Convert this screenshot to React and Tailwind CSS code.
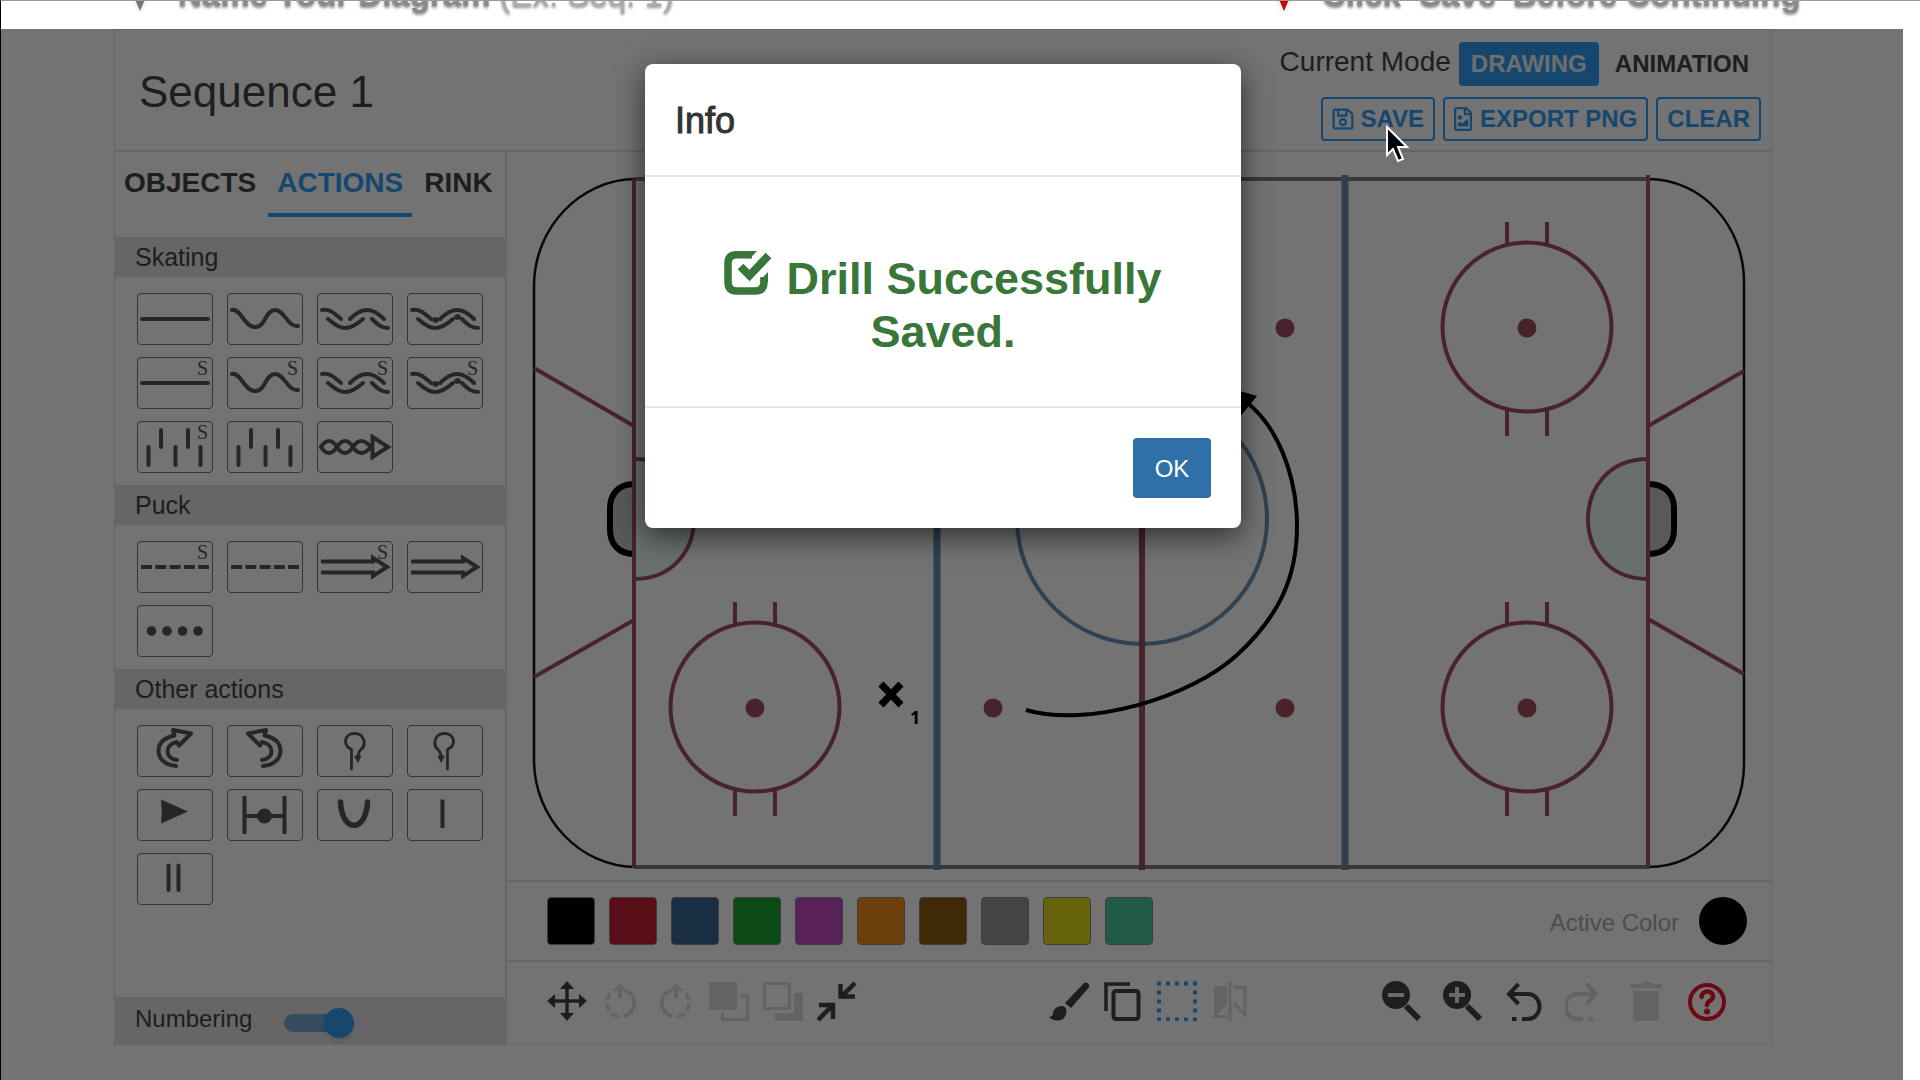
import React from 'react'
import { FaRegSave, FaRegFileImage } from 'react-icons/fa'

const LINE = {
    straight: <path d="M5 26H71" />,
    wave: <path d="M5 17C14 15 17 34 28 34S38 17 48 17S60 34 71 33" />,
    back: (
        <>
            <path d="M5 17C13 16 17 20 24 26" />
            <path d="M11 26C19 33 23 35 28 35S38 33 46 26" />
            <path d="M33 26C40 19 45 17 50 17S60 19 67 26" />
            <path d="M55 26C60 31 64 35 71 35" />
        </>
    ),
    crossover: (
        <>
            <path d="M5 17C13 16 17 20 24 26" />
            <path d="M11 26C19 33 23 35 28 35S38 33 46 26" />
            <path d="M33 26C40 19 45 17 50 17S60 19 67 26" />
            <path d="M55 26C60 31 64 35 71 35" />
            <path d="M28 27h1M50 24h1" strokeWidth="5.500" />
        </>
    ),
    lateral: <path d="M11.500 26V44M24 9V26M38.500 26V44M51 9V26M63.500 26V44" />,
    braid: (
        <>
            <path d="M4 26C9 18 15 18 20 26S31 34 36 26S47 18 54 26" />
            <path d="M4 26C9 34 15 34 20 26S31 18 36 26S47 34 54 26" />
            <path strokeLinejoin="miter" d="M55.500 16L71 26L55.500 36Z" />
        </>
    ),
    pass: <path strokeLinecap="butt" strokeDasharray="11 3.300" d="M4 26H72" />,
    shot: <path strokeLinecap="butt" strokeLinejoin="miter" d="M4 20.500H56V17L70 26L56 35V31.500H4" />,
    dots: (
        <g fill="currentColor" stroke="none">
            <circle cx="14.500" cy="26" r="4.800" />
            <circle cx="30" cy="26" r="4.800" />
            <circle cx="45.500" cy="26" r="4.800" />
            <circle cx="61" cy="26" r="4.800" />
        </g>
    ),
    turn: <path d="M39 41C28 40 21.500 34 21.500 25.500C21.500 17 29 12 37.500 10.500L36 5L54 8.500L42 20.500L40 17C34 18 30.500 22 30.500 26.500C30.500 31 34 34 40 35" />,
    loop: (
        <>
            <path strokeWidth="2.800" d="M34.500 44V24.500C25 20 27.500 8.500 37.500 8.500S50 20 43.500 25C41.500 27 41 29 41 33" />
            <path strokeWidth="1" fill="currentColor" d="M38 31H44L41 37Z" />
        </>
    ),
    play: <path fill="currentColor" stroke="none" d="M24 10.500L51 22.500L24 34.500Q25.500 22.500 24 10.500Z" />,
    stop: (
        <>
            <path strokeLinecap="butt" d="M17.500 7V45M57.500 7V45M17.500 27H57.500" />
            <circle cx="37.500" cy="27" r="7.500" fill="currentColor" stroke="none" />
        </>
    ),
    pivot: <path strokeWidth="5.500" d="M23.500 13C25 44 49 44 50.500 13" />,
    single: <path strokeLinecap="butt" d="M35.500 10.500V39" />,
    double: <path d="M31.500 12.500V37M41.500 12.500V37" />,
}

const mirrored = (shape) => <g transform="translate(75 0) scale(-1 1)">{shape}</g>

const sections = [
    {
        title: 'Skating',
        items: [
            { name: 'Skate forward', shape: LINE.straight },
            { name: 'Skate with puck', shape: LINE.wave },
            { name: 'Skate backward', shape: LINE.back },
            { name: 'Skate backward with puck', shape: LINE.crossover },
            { name: 'Skate forward and stop', shape: LINE.straight, stop: true },
            { name: 'Skate with puck and stop', shape: LINE.wave, stop: true },
            { name: 'Skate backward and stop', shape: LINE.back, stop: true },
            { name: 'Skate backward with puck and stop', shape: LINE.crossover, stop: true },
            { name: 'Lateral and stop', shape: LINE.lateral, stop: true },
            { name: 'Lateral', shape: LINE.lateral },
            { name: 'Weave', shape: LINE.braid },
        ],
    },
    {
        title: 'Puck',
        items: [
            { name: 'Pass and stop', shape: LINE.pass, stop: true },
            { name: 'Pass', shape: LINE.pass },
            { name: 'Shot and stop', shape: LINE.shot, stop: true },
            { name: 'Shot', shape: LINE.shot },
            { name: 'Drop pass', shape: LINE.dots },
        ],
    },
    {
        title: 'Other actions',
        items: [
            { name: 'Turn right', shape: LINE.turn },
            { name: 'Turn left', shape: mirrored(LINE.turn) },
            { name: 'Loop right', shape: LINE.loop },
            { name: 'Loop left', shape: mirrored(LINE.loop) },
            { name: 'Start', shape: LINE.play },
            { name: 'Screen', shape: LINE.stop },
            { name: 'Pivot', shape: LINE.pivot },
            { name: 'Single bar', shape: LINE.single },
            { name: 'Double bar', shape: LINE.double },
        ],
    },
]

const colors = [
    { name: 'Black', className: 'bg-black' },
    { name: 'Red', className: 'bg-[#c82335]' },
    { name: 'Blue', className: 'bg-[#3a6694]' },
    { name: 'Green', className: 'bg-[#1aa334]' },
    { name: 'Purple', className: 'bg-[#be4cc0]' },
    { name: 'Orange', className: 'bg-[#f28c1c]' },
    { name: 'Brown', className: 'bg-[#8f5b10]' },
    { name: 'Gray', className: 'bg-[#979797]' },
    { name: 'Yellow', className: 'bg-[#e3dc1c]' },
    { name: 'Teal', className: 'bg-[#4acb9d]' },
]

const Glyph = ({ children }) => (
    <svg viewBox="0 0 40 40" className="w-10 h-10" fill="none" stroke="currentColor" strokeWidth="4">
        {children}
    </svg>
)

const rotateShape = (
    <>
        <path strokeWidth="3.500" d="M23 9.500C30 11 33.500 16 33.500 21.500S30 33 23 35.500" />
        <path strokeWidth="3.500" strokeDasharray="7 4" d="M17 35.500C10 34 6 28 6 21.500S9 12 14 10" />
        <path fill="currentColor" stroke="none" d="M19 2L26 10H21V17H17V10H12Z" />
    </>
)

const undoShape = (
    <>
        <path d="M14.500 3L5 13L14.500 23" />
        <path d="M6 13H24A11.500 12.500 0 0 1 24 38H18" />
        <path d="M8 38H12.500" />
    </>
)

const editTools = [
    {
        name: 'Move', icon: (
            <Glyph>
                <path strokeWidth="3.500" d="M20 6V34M6 20H34" />
                <path fill="currentColor" stroke="none" d="M20 0L27 8H13ZM20 40L13 32H27ZM0 20L8 13V27ZM40 20L32 27V13Z" />
            </Glyph>
        ),
    },
    { name: 'Rotate left', off: true, icon: <Glyph>{rotateShape}</Glyph> },
    { name: 'Rotate right', off: true, icon: <Glyph><g transform="translate(40 0) scale(-1 1)">{rotateShape}</g></Glyph> },
    {
        name: 'Bring to front', off: true, icon: (
            <Glyph>
                <rect x="0" y="1" width="28" height="28" rx="2" fill="currentColor" stroke="none" />
                <path strokeWidth="3" d="M31 14.500H38.500V38.500H13.500V32" />
            </Glyph>
        ),
    },
    {
        name: 'Send to back', off: true, icon: (
            <Glyph>
                <rect x="1.500" y="2.500" width="25" height="25" rx="1" strokeWidth="3" />
                <path fill="currentColor" stroke="none" d="M31 12H40V40H12V32H31Z" />
            </Glyph>
        ),
    },
    {
        name: 'Fit', icon: (
            <Glyph>
                <path strokeWidth="4.500" d="M38 2L25 15M23.500 3V15.500H38M1 39L15 25M2 24H16V38" />
            </Glyph>
        ),
    },
]

const drawTools = [
    {
        name: 'Brush', icon: (
            <Glyph>
                <path fill="currentColor" stroke="none" d="M35 2Q38 0 41 5L22 27L16 22Z" />
                <path fill="currentColor" stroke="none" d="M13 25C18 25 19 32 15 37C11 41 3 40 0 36C5 35 3 33 5 29Q8 25 13 25Z" />
            </Glyph>
        ),
    },
    {
        name: 'Copy', icon: (
            <Glyph>
                <path strokeWidth="3.500" d="M3 30V3H27" />
                <rect x="10.500" y="10" width="25" height="28" rx="2.500" />
            </Glyph>
        ),
    },
    {
        name: 'Select', active: true, icon: (
            <Glyph>
                <path strokeDasharray="4 5" d="M0 2.500H40M0 38.500H40" />
                <path strokeDasharray="4 5" d="M2 9.500V34M38 9.500V34" />
            </Glyph>
        ),
    },
    {
        name: 'Flip', off: true, icon: (
            <Glyph>
                <path fill="currentColor" stroke="none" d="M3 5H16V37H3ZM6 34L16 23V34Z" fillRule="evenodd" />
                <path strokeWidth="3" d="M19 0V42M23 6.500H35M34 6V36M23 22L34 34" />
            </Glyph>
        ),
    },
]

const handle = <path strokeWidth="6" d="M24 25L37 38" />

const viewTools = [
    {
        name: 'Zoom out', icon: (
            <Glyph>
                <circle cx="14" cy="14" r="14" fill="currentColor" stroke="none" />
                {handle}
                <path stroke="#e8e8e8" d="M6 14H22" />
            </Glyph>
        ),
    },
    {
        name: 'Zoom in', icon: (
            <Glyph>
                <circle cx="14" cy="14" r="14" fill="currentColor" stroke="none" />
                {handle}
                <path stroke="#e8e8e8" d="M6 14H22M14 6V22" />
            </Glyph>
        ),
    },
    { name: 'Undo', icon: <Glyph>{undoShape}</Glyph> },
    { name: 'Redo', off: true, icon: <Glyph><g transform="translate(36 0) scale(-1 1)">{undoShape}</g></Glyph> },
    {
        name: 'Delete', off: true, icon: (
            <Glyph>
                <path fill="currentColor" stroke="none" d="M4 3H14Q20 -2 26 3H36V7H4ZM7 10H33V36Q33 40 29 40H11Q7 40 7 36Z" />
            </Glyph>
        ),
    },
    {
        name: 'Help', danger: true, icon: (
            <Glyph>
                <circle cx="20" cy="21" r="17" />
                <path strokeWidth="4.500" strokeLinecap="round" d="M14.500 16C15 8.500 26.500 9 26 16C25.500 20 20.500 19.500 20 24" />
                <circle cx="20" cy="30.500" r="3" fill="currentColor" stroke="none" />
            </Glyph>
        ),
    },
]

const ToolButton = ({ tool }) => (
    <button
        type="button"
        aria-label={tool.name}
        className={tool.danger ? 'text-[#f0142d]' : tool.active ? 'text-[#2f9df4]' : tool.off ? 'text-[#dcdcdc]' : 'text-[#444]'}
    >
        {tool.icon}
    </button>
)

const FaceOff = ({ x, y }) => (
    <g>
        <circle cx={x} cy={y} r="84.500" />
        <path d={`M${x - 20} ${y - 105}V${y - 82}M${x + 20} ${y - 105}V${y - 82}M${x - 20} ${y + 82}V${y + 109}M${x + 20} ${y + 82}V${y + 109}`} />
        <circle cx={x} cy={y + 1} r="9.500" fill="#a04e60" stroke="none" />
    </g>
)

const Rink = () => (
    <svg viewBox="507 152 1264 728" className="block w-full" fill="none" role="img" aria-label="Rink">
        {/* boards */}
        <path stroke="#111" strokeWidth="2.500" d="M636 179C580 179 534 228 534 286V760C534 818 580 867 636 867M1648 179C1702 179 1744 226 1744 282V764C1744 820 1702 867 1648 867" />
        <path stroke="#7c7c7c" strokeWidth="4" d="M634 179H1650M634 867H1650" />

        {/* creases and nets */}
        <g stroke="#a04e60" strokeWidth="4">
            <path fill="#e9f7f7" d="M634 459C714 459 714 579 634 579" />
            <path fill="#e9f7f7" d="M1648 459C1568 459 1568 579 1648 579" />
        </g>
        <g stroke="#000" strokeWidth="6" fill="#c6c6c6">
            <path d="M634 484C618 484 610 495 610 508V530C610 543 618 554 634 554" />
            <path d="M1648 484C1666 484 1674 495 1674 508V530C1674 543 1666 554 1648 554" />
        </g>

        <circle cx="1142" cy="519" r="125" stroke="#6a90b4" strokeWidth="4" />

        <g stroke="#a04e60" strokeWidth="4">
            <path d="M634 179V868M1648 175V868" />
            <path d="M534 368L634 426M534 677L634 620M1648 426L1744 371M1648 619L1744 674" />
            <path strokeWidth="6" d="M1142 175V870" />
            <FaceOff x={755} y={327} />
            <FaceOff x={755} y={707} />
            <FaceOff x={1527} y={327} />
            <FaceOff x={1527} y={707} />
        </g>
        <path stroke="#668cb4" strokeWidth="7" d="M937 175V870M1345 175V870" />
        <g fill="#a04e60">
            <circle cx="993" cy="328" r="9.500" />
            <circle cx="1285" cy="328" r="9.500" />
            <circle cx="993" cy="708" r="9.500" />
            <circle cx="1285" cy="708" r="9.500" />
        </g>

        {/* drill */}
        <path stroke="#000" strokeWidth="4" d="M1026 710C1087 728 1190 698 1237 655C1277 618 1297 580 1297 526C1297 475 1277 425 1245 401" />
        <path fill="#000" d="M1226 387L1257 396L1239 418Z" />
        <path stroke="#000" strokeWidth="7" d="M881 684L901 705M901 684L881 705" />
        <text x="910" y="724" fill="#000" className="font-['Open_Sans',sans-serif] text-[18px] font-bold">1</text>
    </svg>
)

const Pin = ({ className }) => (
    <svg viewBox="0 0 24 28" className={className}>
        <path fill="currentColor" d="M0 0H24L12 28Z" />
    </svg>
)

export default function App() {
    return (
        <div className="min-h-screen flex flex-col bg-white border-l border-t border-l-black border-t-[#999] pr-[17px] font-['Liberation_Sans',Arial,sans-serif] text-[#444]">
            <div className="h-7 shrink-0 overflow-hidden grid grid-cols-[1144px_1fr] content-end pl-[127px] pb-[18px] text-[33px] leading-8 font-bold whitespace-nowrap text-[#8a8a8a] [text-shadow:0_2px_3px_#888]">
                <p className="flex items-end gap-[26px]">
                    <Pin className="w-6 h-7 text-[#777] drop-shadow-sm" />
                    <span>Name Your Diagram <span className="font-normal text-[#aaa]">(Ex: Seq. 1)</span></span>
                </p>
                <p className="flex items-end gap-[26px]">
                    <Pin className="w-6 h-7 text-[#c4000a] drop-shadow-md" />
                    <span>Click ‘Save’ Before Continuing</span>
                </p>
            </div>

            <main className="relative flex-1 pl-[113px] pr-[131px] pb-9">
                <div className="border border-[#e2e2e2]">
                    <header className="flex justify-between pl-6 pr-[10px] pt-3 pb-[9px] border-b-2 border-[#e2e2e2]">
                        <input
                            aria-label="Diagram name"
                            defaultValue="Sequence 1"
                            className="w-[400px] bg-transparent text-[44px] text-[#444] outline-none"
                        />
                        <div className="flex flex-col items-end gap-[11px] text-2xl font-bold">
                            <div className="flex items-center gap-1">
                                <span className="text-[28px] leading-9 font-normal mr-1 pb-1">Current Mode</span>
                                <button type="button" className="h-11 px-3 rounded-sm bg-[#2f9df4] text-[#f4f4f4]">DRAWING</button>
                                <button type="button" className="h-11 px-3">ANIMATION</button>
                            </div>
                            <div className="flex gap-2 text-[#2f9df4]">
                                <button type="button" className="h-11 px-[9px] border-2 border-[#2f9df4] rounded-sm flex items-center gap-[6px]">
                                    <FaRegSave className="w-[22px] h-6" />
                                    SAVE
                                </button>
                                <button type="button" className="h-11 px-[9px] border-2 border-[#2f9df4] rounded-sm flex items-center gap-2">
                                    <FaRegFileImage className="w-[18px] h-6" />
                                    EXPORT PNG
                                </button>
                                <button type="button" className="h-11 px-[9px] border-2 border-[#2f9df4] rounded-sm">CLEAR</button>
                            </div>
                        </div>
                    </header>

                    <div className="flex">
                        <aside className="w-[392px] shrink-0 flex flex-col border-r-2 border-[#e2e2e2]">
                            <nav className="flex gap-[3px] mb-5 text-[28px] leading-8 font-bold">
                                <button type="button" className="px-[9px] pt-[15px] pb-[14px] border-b-4 border-transparent">OBJECTS</button>
                                <button type="button" className="px-[9px] pt-[15px] pb-[14px] border-b-4 border-[#2f9df4] text-[#2f9df4]">ACTIONS</button>
                                <button type="button" className="px-[9px] pt-[15px] pb-[14px] border-b-4 border-transparent">RINK</button>
                            </nav>

                            {sections.map((section) => (
                                <section key={section.title}>
                                    <h2 className="h-10 pl-5 bg-[#e2e2e2] text-[25px] leading-10">{section.title}</h2>
                                    <div className="grid grid-cols-[repeat(4,76px)] gap-x-[14px] gap-y-3 pl-[22px] pt-4 pb-3">
                                        {section.items.map((item) => (
                                            <button
                                                key={item.name}
                                                type="button"
                                                aria-label={item.name}
                                                className="relative h-[52px] border border-[#777] rounded-sm text-[#565656]"
                                            >
                                                <svg viewBox="1 1 74 50" className="block w-full h-full" fill="none" stroke="currentColor" strokeWidth="4" strokeLinecap="round" strokeLinejoin="round">
                                                    {item.shape}
                                                </svg>
                                                {item.stop && (
                                                    <span className="absolute top-0 right-1 font-['Liberation_Serif',serif] text-[20px] leading-5">S</span>
                                                )}
                                            </button>
                                        ))}
                                    </div>
                                </section>
                            ))}

                            <label className="mt-auto h-[47px] pl-5 pb-1 flex items-center gap-8 bg-[#e2e2e2] text-2xl">
                                Numbering
                                <input
                                    type="checkbox"
                                    defaultChecked
                                    className="appearance-none relative top-1 w-[70px] h-[18px] rounded-full bg-[#74a6d4] before:absolute before:right-0 before:-top-[6px] before:w-[30px] before:h-[30px] before:rounded-full before:bg-[#2f9df4] before:shadow-md"
                                />
                            </label>
                        </aside>

                        <div className="flex-1 min-w-0">
                            <Rink />
                            <div className="h-20 flex items-center justify-between pl-10 pr-6 border-t-2 border-[#e2e2e2]">
                                <div className="flex gap-[14px]">
                                    {colors.map((color) => (
                                        <button key={color.name} type="button" aria-label={color.name} className={`w-12 h-12 rounded border border-[#888] ${color.className}`} />
                                    ))}
                                </div>
                                <div className="flex items-center gap-5 text-2xl text-[#aaa]">
                                    <span className="pt-1">Active Color</span>
                                    <span className="w-12 h-12 rounded-full bg-black" />
                                </div>
                            </div>
                            <div className="h-[84px] flex items-center pl-10 pr-11 pb-1 border-t-2 border-[#e2e2e2]">
                                <div className="flex gap-[14px]">
                                    {editTools.map((tool) => <ToolButton key={tool.name} tool={tool} />)}
                                </div>
                                <div className="flex gap-[14px] ml-48">
                                    {drawTools.map((tool) => <ToolButton key={tool.name} tool={tool} />)}
                                </div>
                                <div className="flex gap-[21px] ml-auto">
                                    {viewTools.map((tool) => <ToolButton key={tool.name} tool={tool} />)}
                                </div>
                            </div>
                        </div>
                    </div>
                </div>

                {/* backdrop + dialog */}
                <div className="absolute inset-0 bg-black/55 pl-[113px] pr-[131px] pt-[35px]">
                    <div role="dialog" aria-label="Info" className="w-[596px] mx-auto rounded-lg bg-white shadow-[0_8px_30px_rgba(0,0,0,0.6)]">
                        <h3 className="h-[113px] px-[30px] pt-[3px] flex items-center border-b-2 border-[#e5e5e5] text-[36px] text-[#333] [-webkit-text-stroke:1px_#333]">Info</h3>
                        <div className="h-[231px] flex items-center justify-center border-b-2 border-[#e5e5e5]">
                            <p className="w-[460px] pt-6 text-center text-[45px] leading-[53px] font-bold text-[#38763a]">
                                <svg viewBox="0 0 48 46" className="inline-block w-12 h-[46px] mr-[14px] align-[-2px]" fill="none" stroke="currentColor">
                                    <path strokeWidth="7.500" d="M28 4.800H13Q4 4.800 4 13V32Q4 41 13 41H31Q40 41 40 32V27" />
                                    <path strokeWidth="0" fill="currentColor" d="M26 8.500L33 1H24V8.500ZM36.200 30L44 22V32H36.200Z" />
                                    <path strokeWidth="8" d="M16.500 16.500L25.500 25.500L44.500 5.500" />
                                </svg>
                                Drill Successfully Saved.
                            </p>
                        </div>
                        <div className="flex justify-end p-[30px]">
                            <button type="button" className="w-[78px] h-[60px] pt-px rounded bg-[#3070a9] text-2xl text-white">OK</button>
                        </div>
                    </div>
                </div>

                <svg viewBox="0 0 24 38" className="absolute top-24 left-[1384px] w-6 h-[38px]">
                    <path d="M2 2V30L8 24L13 36L18 34L13 22H22Z" fill="#000" stroke="#fff" strokeWidth="2" />
                </svg>
            </main>
        </div>
    )
}
